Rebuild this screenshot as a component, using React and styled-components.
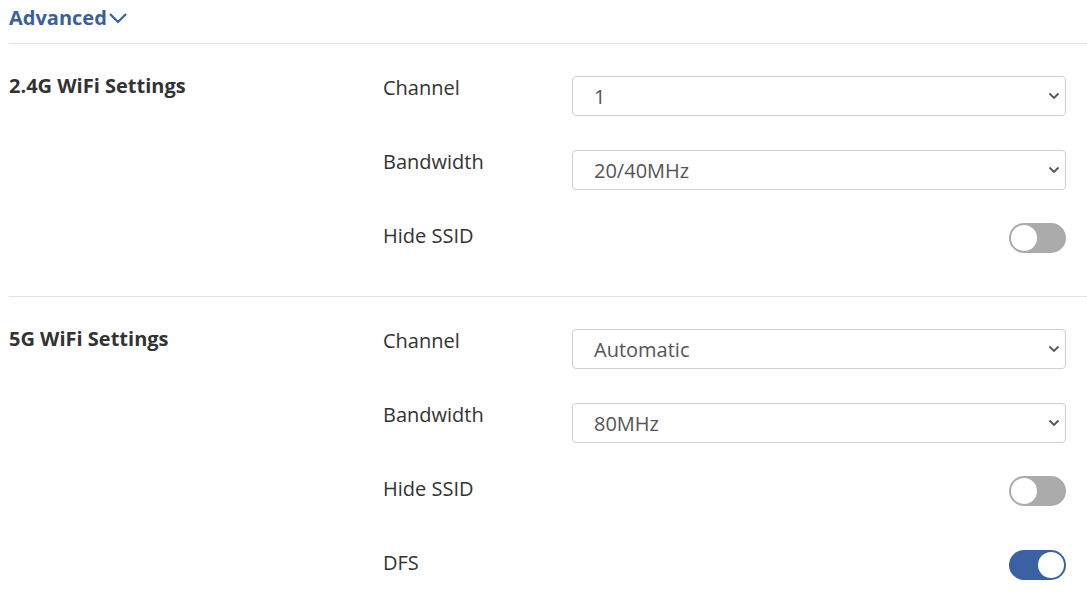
import React, { useState } from 'react';
import styled, { createGlobalStyle } from 'styled-components';

const GlobalStyle = createGlobalStyle`
  body {
    margin: 0;
    background: #fff;
    font-family: "Open Sans", "Noto Sans", Arial, sans-serif;
  }
`;

const Page = styled.div`
  padding: 0 21px 0 9px;
`;

const Header = styled.div`
  display: flex;
  align-items: center;
  box-sizing: border-box;
  height: 44px;
  padding-bottom: 8px;
  margin-right: -21px;
  border-bottom: 1px solid #e2e2e2;
  color: #3a5fa0;
  font-size: 20px;
  font-weight: 700;
`;

const Section = styled.div`
  display: flex;
  padding: 32px 21px 32px 0;
  margin-right: -21px;
  border-bottom: ${(p) => (p.last ? 'none' : '1px solid #e2e2e2')};
`;

const Title = styled.div`
  width: 374px;
  flex-shrink: 0;
  font-size: 20px;
  font-weight: 700;
  color: #333;
  line-height: 24px;
  margin-top: -2px;
`;

const Rows = styled.div`
  flex: 1;
  display: flex;
  flex-direction: column;
  gap: 34px;
`;

const Row = styled.div`
  display: flex;
  align-items: flex-start;
  min-height: 40px;
`;

const Label = styled.div`
  width: 189px;
  flex-shrink: 0;
  font-size: 20px;
  line-height: 24px;
  color: #333;
`;

const Control = styled.div`
  flex: 1;
  display: flex;
  justify-content: flex-end;
  position: relative;
`;

const Select = styled.select`
  appearance: none;
  width: 100%;
  height: 40px;
  border: 1px solid #cfcfcf;
  border-radius: 4px;
  background: #fff;
  padding: 0 21px;
  font-family: inherit;
  font-size: 20px;
  color: #555;
  outline: none;
`;

const Arrow = styled.svg`
  position: absolute;
  right: 6px;
  top: 16px;
  pointer-events: none;
`;

const Track = styled.button`
  width: 57px;
  height: 30px;
  margin-top: -1px;
  border: none;
  border-radius: 15px;
  padding: 2px;
  background: ${(p) => (p.on ? '#3a62a3' : '#ababab')};
  display: flex;
  justify-content: ${(p) => (p.on ? 'flex-end' : 'flex-start')};
  cursor: pointer;
`;

const Knob = styled.span`
  width: 26px;
  height: 26px;
  border-radius: 50%;
  background: #fff;
`;

const Dropdown = ({ value, options }) => (
  <Control>
    <Select defaultValue={value}>
      {options.map((o) => (
        <option key={o}>{o}</option>
      ))}
    </Select>
    <Arrow width="12" height="8" viewBox="0 0 12 8">
      <path d="M1.5 1.5 L6 6 L10.5 1.5" fill="none" stroke="#555" strokeWidth="1.8" />
    </Arrow>
  </Control>
);

const Toggle = ({ initial }) => {
  const [on, setOn] = useState(initial);
  return (
    <Control>
      <Track on={on ? 1 : 0} onClick={() => setOn(!on)}>
        <Knob />
      </Track>
    </Control>
  );
};

const App = () => (
  <>
    <GlobalStyle />
    <Page>
      <Header>
        Advanced
        <svg width="20" height="12" viewBox="0 0 20 12" style={{ marginLeft: 1 }}>
          <path d="M2 2 L10 10 L18 2" fill="none" stroke="#3a5fa0" strokeWidth="2.2" />
        </svg>
      </Header>
      <Section>
        <Title>2.4G WiFi Settings</Title>
        <Rows>
          <Row>
            <Label>Channel</Label>
            <Dropdown value="1" options={['Automatic', '1', '2', '3', '4', '5', '6', '7', '8', '9', '10', '11']} />
          </Row>
          <Row>
            <Label>Bandwidth</Label>
            <Dropdown value="20/40MHz" options={['20MHz', '40MHz', '20/40MHz']} />
          </Row>
          <Row>
            <Label>Hide SSID</Label>
            <Toggle initial={false} />
          </Row>
        </Rows>
      </Section>
      <Section last>
        <Title>5G WiFi Settings</Title>
        <Rows>
          <Row>
            <Label>Channel</Label>
            <Dropdown value="Automatic" options={['Automatic', '36', '40', '44', '48', '149', '153', '157', '161']} />
          </Row>
          <Row>
            <Label>Bandwidth</Label>
            <Dropdown value="80MHz" options={['20MHz', '40MHz', '80MHz']} />
          </Row>
          <Row>
            <Label>Hide SSID</Label>
            <Toggle initial={false} />
          </Row>
          <Row>
            <Label>DFS</Label>
            <Toggle initial />
          </Row>
        </Rows>
      </Section>
    </Page>
  </>
);

export default App;
